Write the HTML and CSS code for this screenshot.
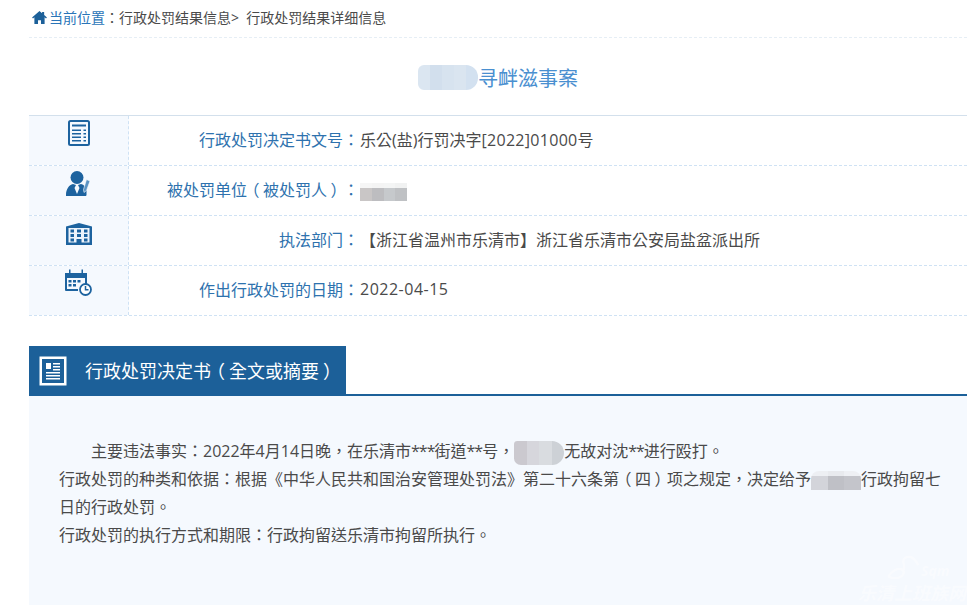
FILE: index.html
```html
<!DOCTYPE html>
<html lang="zh-TW">
<head>
<meta charset="utf-8">
<title>行政处罚结果详细信息</title>
<link rel="stylesheet" href="styles.css">
</head>
<body>
<main class="page">
  <nav class="crumb">
    <svg class="home" viewBox="0 0 16 14"><path d="M8 0 L10.800 2.400 V1 H13 V4.300 L16 7 L15 8 L13.500 6.800 V14 H9.600 V10 H6.400 V14 H2.500 V6.800 L1 8 L0 7 Z"/></svg>
    <span class="here">当前位置</span><span>：行政处罚结果信息&gt;&nbsp; 行政处罚结果详细信息</span>
  </nav>
  <h1 class="title"><span class="mosaic m-title"><i></i><i></i><i></i><i></i><i></i></span>寻衅滋事案</h1>
  <section class="info">
    <div class="row">
      <div class="ico"><svg width="22" height="26" viewBox="0 0 22 26"><rect x="1" y="1" width="20" height="24" rx="1.500" fill="none" stroke="#1d639f" stroke-width="2"/><path d="M4 4.500h14v2H4zM4 9.500h9v1.500H4zM15.500 9.500h2.500v1.500h-2.500zM4 13h9v1.500H4zM15.500 13h2.500v1.500h-2.500zM4 16.500h9v1.500H4zM15.500 16.500h2.500v1.500h-2.500zM4 20h9v1.500H4zM15.500 20h2.500v1.500h-2.500z" fill="#1d639f"/></svg></div>
      <div class="label">行政处罚决定书文号：</div>
      <div class="value">乐公(盐)行罚决字<span class="num-s">[2022]01000</span>号</div>
    </div>
    <div class="row">
      <div class="ico ico-2"><svg width="25" height="25" viewBox="0 0 25 25"><circle cx="11" cy="6.500" r="6.500" fill="#1d639f"/><path d="M0 24c0-6 3-10 7-11l3 1-1.500 3 2.500 6 2.500-6-1.500-3 3-1c3 .8 5 3 5.500 6v5c0 .5-.5 1-1 1H0z" fill="#1d639f"/><path d="M20.500 8.500l3.500 1.500-3.500 9.500-2.500 2-.5-3z" fill="#5a93c4" stroke="#fff" stroke-width=".6"/></svg></div>
      <div class="label">被处罚单位<span class="pl">（</span>被处罚人<span class="pr">）</span>：</div>
      <div class="value"><span class="mosaic m-name"><i></i><i></i><i></i><i></i></span></div>
    </div>
    <div class="row">
      <div class="ico ico-3"><svg width="26" height="23" viewBox="0 0 26 23"><path d="M0 3.500 13 0l13 3.500V22H0z" fill="#1d639f"/><path d="M2.500 5h21v14.500h-21z" fill="#eef4fb"/><path d="M4.500 6.500h3.500v3H4.500zM11 6.500h4v3h-4zM18 6.500h3.500v3H18zM4.500 11h3.500v3H4.500zM11 11h4v3h-4zM18 11h3.500v3H18zM4.500 15.500h3.500v3H4.500zM18 15.500h3.500v3H18zM10.500 16h5v6h-5z" fill="#1d639f"/></svg></div>
      <div class="label">执法部门：</div>
      <div class="value">【浙江省温州市乐清市】浙江省乐清市公安局盐盆派出所</div>
    </div>
    <div class="row">
      <div class="ico ico-4"><svg width="27" height="27" viewBox="0 0 27 27"><path d="M1 4h20a1 1 0 0 1 1 1v10h-2V9H2v11h11v2H1a1 1 0 0 1-1-1V5a1 1 0 0 1 1-1z" fill="#1d639f"/><path d="M0 4h22v5H0z" fill="#1d639f"/><path d="M4 .5h1.500v5H4zM16.500.5H18v5h-1.500z" fill="#1d639f"/><path d="M3.500 11h3v2.500h-3zM8 11h3v2.500H8zM12.500 11h3v2.500h-3zM3.500 15h3v2.500h-3zM8 15h3v2.500H8z" fill="#1d639f"/><circle cx="20.500" cy="20.500" r="5.500" fill="#fff" stroke="#1d639f" stroke-width="1.800"/><path d="M20.500 17v3.700h3" fill="none" stroke="#1d639f" stroke-width="1.500"/></svg></div>
      <div class="label">作出行政处罚的日期：</div>
      <div class="value"><span class="num">2022-04-15</span></div>
    </div>
  </section>
  <header class="sec-head">
    <div class="tab">
      <svg class="tab-ico" width="28" height="30" viewBox="0 0 28 30"><rect x="1" y="1" width="26" height="28" fill="#fff" stroke="#fff"/><rect x="3" y="3" width="22" height="24" fill="#1c6099"/><path d="M7 7h5v6H7zM14 7h7v1.500h-7zM14 10h7v1.500h-7zM14 13h7v1.500h-7zM7 16h14v1.500H7zM7 19h14v1.500H7zM7 22h14v1.500H7z" fill="#fff"/></svg>
      <h2 class="tab-title">行政处罚决定书<span class="pl">（</span>全文或摘要<span class="pr">）</span></h2>
    </div>
  </header>
  <section class="panel">
    <p class="lead">主要违法事实：2022年4月14日晚，在乐清市<span class="star">***</span>街道<span class="star">**</span>号，<span class="mosaic m-a"><i></i><i></i><i></i><i></i></span>无故对沈<span class="star">**</span>进行殴打<span class="sc">。</span></p>
    <p>行政处罚的种类和依据：根据《中华人民共和国治安管理处罚法》第二十六条第<span class="pl">（</span>四<span class="pr">）</span>项之规定，决定给予<span class="mosaic m-b"><i></i><i></i><i></i></span>行政拘留七日的行政处罚<span class="sc">。</span></p>
    <p>行政处罚的执行方式和期限：行政拘留送乐清市拘留所执行<span class="sc">。</span></p>
    <div class="mark">
      <div class="mark-top">
        <svg width="44" height="28" viewBox="0 0 44 30"><path d="M3 24c6-8 13-8 15-5s-2 8-8 8-9-2-7-3zM17 20c4-3 1-8 1-11s3-5 6-5c5 0 8 5 10 9" fill="none" stroke="#fff" stroke-width="2.500"/></svg>
        <span class="mark-sq">Sqm</span>
      </div>
      <span class="mark-txt">乐清上班族网</span>
    </div>
  </section>
</main>
</body>
</html>
```
FILE: styles.css
```css
html, body {
  margin: 0;
  padding: 0;
  height: 605px;
  overflow: hidden;
  background: #fff;
  font-family: "Open Sans", "Noto Sans CJK TC", sans-serif;
  color: #4a4a4a;
  text-spacing-trim: space-all;
}
.page {
  width: 938px;
  margin-left: 29px;
}
.crumb {
  height: 38px;
  box-sizing: border-box;
  border-bottom: 1px dashed #e6eef5;
  display: flex;
  align-items: center;
  padding: 0 0 3px 3px;
  font-size: 14px;
}
.home {
  width: 15px;
  height: 13px;
  fill: #1c6099;
  margin-right: 2px;
}
.here { color: #2a75b8; }
.title {
  margin: 0;
  height: 78px;
  box-sizing: border-box;
  border-bottom: 1px solid #d3e0ec;
  padding-top: 1px;
  display: flex;
  align-items: center;
  justify-content: center;
  font-size: 20px;
  font-weight: 400;
  color: #4a8fd0;
}
.pl, .pr { display: inline-block; line-height: 1; }
.pl { transform: translateX(-.22em); }
.pr { transform: translateX(.22em); }
.star { letter-spacing: -1px; }
.sc { font-family: "Noto Sans CJK SC", sans-serif; line-height: 1; }
.mosaic {
  display: inline-flex;
  flex: none;
  overflow: hidden;
  vertical-align: middle;
}
.mosaic i { flex: 1; }
.m-title {
  width: 60px;
  height: 25px;
  border-radius: 6px 12px 12px 6px;
}
.m-title i:nth-child(1) { background: #dbe6f1; }
.m-title i:nth-child(2) { background: #d2dfed; }
.m-title i:nth-child(3) { background: #d7e3ef; }
.m-title i:nth-child(4) { background: #dae5f0; }
.m-title i:nth-child(5) { background: #d3e1f0; }
.row {
  height: 50px;
  box-sizing: border-box;
  border-bottom: 1px dashed #cfe2f4;
  display: grid;
  grid-template-columns: 100px 230px 1fr;
  align-items: center;
  font-size: 16px;
}
.ico {
  height: 100%;
  box-sizing: border-box;
  background: #f5f9fe;
  border-right: 1px dashed #cfe2f4;
  display: flex;
  justify-content: center;
  align-items: flex-start;
  padding-top: 4px;
}
.ico-2 { padding-top: 5px; }
.ico-3 { padding-top: 7px; }
.ico-4 { padding-top: 3px; }
.label {
  color: #2e72ae;
  text-align: right;
  white-space: nowrap;
  padding-bottom: 3px;
}
.value {
  color: #4a4a4a;
  padding: 0 0 3px 1px;
  white-space: nowrap;
}
.num { letter-spacing: .5px; }
.num-s { letter-spacing: .3px; }
.m-name {
  width: 47px;
  height: 18px;
  margin-top: 3px;
}
.m-name i:nth-child(1) { background: linear-gradient(#f6f6f6 28%, #c9c6c6 28%); }
.m-name i:nth-child(2) { background: linear-gradient(#f4f4f4 28%, #bdbdc0 28%); }
.m-name i:nth-child(3) { background: linear-gradient(#f4f5f5 28%, #c6c9cc 28%); }
.m-name i:nth-child(4) { background: linear-gradient(#f1f2f2 28%, #bfc1c4 28%); }
.sec-head {
  margin-top: 30px;
  height: 50px;
  box-sizing: border-box;
  border-bottom: 2px solid #1c6099;
}
.tab {
  width: 317px;
  height: 50px;
  background: #1c6099;
  display: flex;
  align-items: center;
  padding-left: 10px;
  box-sizing: border-box;
}
.tab-ico { flex: none; }
.tab-title {
  margin: 0 0 2px 18px;
  font-size: 18px;
  font-weight: 400;
  color: #fff;
  white-space: nowrap;
}
.panel {
  position: relative;
  height: 209px;
  box-sizing: border-box;
  padding: 41px 20px 0 30px;
  background: #f5f9fe;
  overflow: hidden;
  font-size: 16px;
  line-height: 28px;
  color: #4a4a4a;
}
.panel p { margin: 0; }
.lead { text-indent: 32px; }
.m-a {
  width: 50px;
  height: 24px;
  margin: -4px 0;
  border-radius: 4px 14px 14px 8px;
  text-indent: 0;
}
.m-a i:nth-child(1) { background: #cbc9cf; }
.m-a i:nth-child(2) { background: #d6d6dc; }
.m-a i:nth-child(3) { background: #d9dce0; }
.m-a i:nth-child(4) { background: #cdd1d6; }
.m-b {
  width: 50px;
  height: 19px;
  margin: -4px 0;
  border-radius: 8px 8px 0 0;
}
.m-b i:nth-child(1) { background: linear-gradient(#edeff3 25%, #d3d4da 25%); }
.m-b i:nth-child(2) { background: linear-gradient(#e8eaee 25%, #bfc0c6 25%); }
.m-b i:nth-child(3) { background: linear-gradient(#eef0f4 25%, #c4c5cb 25%); }
.mark {
  position: absolute;
  left: 829px;
  top: 157px;
  width: 109px;
  opacity: .45;
}
.mark-top {
  display: flex;
  align-items: flex-end;
  height: 28px;
  padding-left: 27px;
  margin-bottom: 2px;
}
.mark-sq {
  font-size: 14px;
  line-height: 16px;
  font-style: italic;
  font-weight: 700;
  color: #fff;
  margin-left: -8px;
  margin-bottom: 2px;
}
.mark-txt {
  display: block;
  font-size: 18px;
  line-height: 20px;
  font-weight: 700;
  font-style: italic;
  color: #fff;
  white-space: nowrap;
}
```
